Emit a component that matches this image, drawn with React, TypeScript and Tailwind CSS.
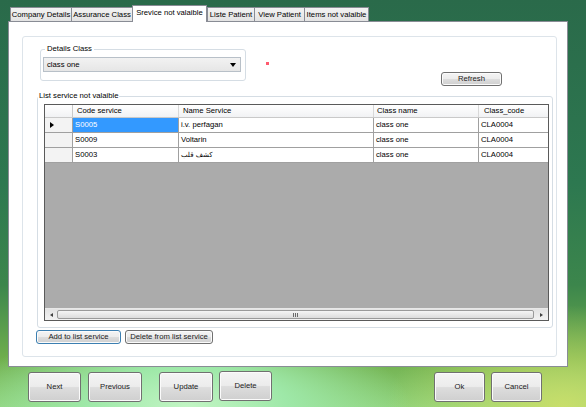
import type { ReactNode } from 'react';

const TABS = [
  { label: 'Company Details', w: 'w-[62px]' },
  { label: 'Assurance Class', w: 'w-[62px]' },
  { label: 'Srevice not valaible', w: 'w-[75px]', active: true },
  { label: 'Liste Patient', w: 'w-[48px]' },
  { label: 'View Patient', w: 'w-[51px]' },
  { label: 'Items not valaible', w: 'w-[65px]' },
];

const ROWS = [
  { code: 'S0005', name: 'i.v. perfagan', cls: 'class one', clsCode: 'CLA0004', current: true },
  { code: 'S0009', name: 'Voltarin', cls: 'class one', clsCode: 'CLA0004' },
  { code: 'S0003', name: 'كشف قلب', cls: 'class one', clsCode: 'CLA0004', arabic: true },
];

const BTN =
  'flex items-center justify-center rounded-[3px] border border-[#707070] bg-[linear-gradient(to_bottom,#f4f4f4_0%,#ececec_48%,#dddddd_52%,#cfcfcf_100%)] text-[#1a1a1a] shadow-[inset_0_0_0_1px_#fbfbfb]';

function WinButton({ children, className = '' }: { children: ReactNode; className?: string }) {
  return <button className={`${BTN} ${className}`}>{children}</button>;
}

export default function App() {
  return (
    <div
      className="w-[586px] h-[407px] overflow-hidden flex flex-col text-[7.7px] leading-none text-black bg-[radial-gradient(ellipse_38%_22%_at_32%_100%,#c2f5c4_0%,#9ee8a8_45%,transparent_100%),radial-gradient(ellipse_30%_25%_at_96%_100%,#c8de6a_0%,transparent_100%),linear-gradient(to_bottom,#2a6a4a_0%,#2d7850_45%,#3c864c_70%,#6fae4c_88%,#8fd27a_100%)]"
      style={{ fontFamily: '"Segoe UI", Tahoma, "Liberation Sans", "DejaVu Sans", sans-serif' }}
    >
      {/* Tab strip */}
      <div className="flex items-end h-[21px] pl-[10px]">
        {TABS.map((t) =>
          t.active ? (
            <div
              key={t.label}
              className={`${t.w} h-[17px] -mb-px z-10 bg-white border border-b-0 border-[#898c95] flex items-start justify-center pt-[3px]`}
            >
              {t.label}
            </div>
          ) : (
            <div
              key={t.label}
              className={`${t.w} h-[14px] bg-[linear-gradient(to_bottom,#f3f3f3,#e3e3e3)] border border-b-0 border-[#898c95] -mr-px flex items-center justify-center`}
            >
              {t.label}
            </div>
          ),
        )}
      </div>

      {/* Tab page */}
      <div className="ml-[8px] w-[560px] h-[346px] bg-white border border-[#898c95] pl-[13px] pt-[14px]">
        <div className="w-[535px] h-[321px] rounded-[3px] border border-[#dde4ea] flex flex-col">
          {/* Details class row */}
          <div className="flex items-start">
            <fieldset className="ml-[17px] mt-[7px] w-[206px] h-[37px] border border-[#d5dde4] rounded-[3px] px-[2px]">
              <legend className="ml-[2px] px-[2px] leading-[10px]">Details Class</legend>
              <div className="mt-[3px] h-[15px] w-[198px] border border-[#b8c0c8] bg-[linear-gradient(to_bottom,#f2f2f2,#e6e6e6)] flex items-center justify-between pl-[3px] pr-[4px]">
                <span>class one</span>
                <span className="w-0 h-0 border-l-[3px] border-r-[3px] border-t-[4px] border-l-transparent border-r-transparent border-t-black" />
              </div>
            </fieldset>
            <div className="ml-[20px] mt-[25px] w-[3px] h-[3px] bg-[#ff5a6e]" />
            <WinButton className="ml-auto mr-[54px] mt-[35px] w-[61px] h-[14px]">Refresh</WinButton>
          </div>

          {/* List fieldset */}
          <fieldset className="ml-[14px] mt-[5px] w-[516px] h-[237px] border border-[#d5dde4] rounded-[3px] pl-[6px]">
            <legend className="ml-[-6px] px-[1px] leading-[10px]">List service not valaible</legend>
            <div className="mt-[3px] w-[505px] h-[217px] border border-[#5a5a5a] bg-[#ababab] flex flex-col overflow-hidden">
              {/* Header */}
              <div className="flex h-[13px] bg-[linear-gradient(to_bottom,#ffffff,#f1f2f4)] border-b border-[#c9c9c9] shrink-0">
                <div className="w-[28px] shrink-0 border-r border-[#c9c9c9]" />
                <div className="w-[106px] shrink-0 border-r border-[#d8d8d8] pl-[4px] flex items-center">Code service</div>
                <div className="w-[195px] shrink-0 border-r border-[#d8d8d8] pl-[4px] flex items-center">Name Service</div>
                <div className="w-[105px] shrink-0 border-r border-[#d8d8d8] pl-[3px] flex items-center">Class name</div>
                <div className="w-[80px] shrink-0 pl-[5px] flex items-center">Class_code</div>
              </div>
              {/* Rows */}
              {ROWS.map((r) => (
                <div key={r.code} className="flex h-[15px] shrink-0 bg-white border-b border-[#a0a0a0]">
                  <div className="w-[28px] shrink-0 bg-[#f3f3f3] border-r border-[#a0a0a0] flex items-center pl-[5px]">
                    {r.current && (
                      <span className="w-0 h-0 border-t-[3px] border-b-[3px] border-l-[4px] border-t-transparent border-b-transparent border-l-black" />
                    )}
                  </div>
                  <div
                    className={`w-[106px] shrink-0 border-r border-[#a0a0a0] pl-[2px] flex items-center ${r.current ? 'bg-[#3399ff] text-white' : ''}`}
                  >
                    {r.code}
                  </div>
                  <div className="w-[195px] shrink-0 border-r border-[#a0a0a0] pl-[2px] flex items-center">
                    {r.arabic ? (
                      <span className="text-[7px] font-['DejaVu_Sans',sans-serif]">{r.name}</span>
                    ) : (
                      r.name
                    )}
                  </div>
                  <div className="w-[105px] shrink-0 border-r border-[#a0a0a0] pl-[2px] flex items-center">{r.cls}</div>
                  <div className="w-[80px] shrink-0 pl-[2px] flex items-center">{r.clsCode}</div>
                </div>
              ))}
              <div className="flex-1" />
              {/* Horizontal scrollbar */}
              <div className="h-[12px] shrink-0 flex items-stretch bg-[linear-gradient(to_bottom,#e3e3e3,#f2f2f2)] border-t border-[#e8e8e8]">
                <div className="w-[12px] flex items-center justify-center">
                  <span className="w-0 h-0 border-t-[2px] border-b-[2px] border-r-[3px] border-t-transparent border-b-transparent border-r-[#404040]" />
                </div>
                <div className="flex-1 my-[1px] rounded-[2px] border border-[#9a9a9a] bg-[linear-gradient(to_bottom,#f5f5f5,#dcdcdc)] flex items-center justify-center">
                  <span className="flex gap-[1px]">
                    <span className="w-px h-[4px] bg-[#6a6a6a]" />
                    <span className="w-px h-[4px] bg-[#6a6a6a]" />
                    <span className="w-px h-[4px] bg-[#6a6a6a]" />
                  </span>
                </div>
                <div className="w-[14px] flex items-center justify-center">
                  <span className="w-0 h-0 border-t-[2px] border-b-[2px] border-l-[3px] border-t-transparent border-b-transparent border-l-[#404040]" />
                </div>
              </div>
            </div>
          </fieldset>

          {/* List actions */}
          <div className="flex gap-[4px] ml-[13px] mt-[2px]">
            <WinButton className="w-[85px] h-[14px] !border-[#3c7fb1] shadow-[inset_0_0_0_1px_#bfe4f6]">Add to list service</WinButton>
            <WinButton className="w-[88px] h-[14px]">Delete from list service</WinButton>
          </div>
        </div>
      </div>

      {/* Bottom buttons */}
      <div className="flex items-start mt-[5px] pl-[28px]">
        <WinButton className="w-[53px] h-[30px]">Next</WinButton>
        <WinButton className="ml-[7px] w-[54px] h-[30px]">Previous</WinButton>
        <WinButton className="ml-[17px] w-[54px] h-[30px]">Update</WinButton>
        <WinButton className="ml-[6px] -mt-[1px] w-[53px] h-[30px]">Delete</WinButton>
        <WinButton className="ml-[162px] w-[51px] h-[30px]">Ok</WinButton>
        <WinButton className="ml-[6px] w-[51px] h-[30px]">Cancel</WinButton>
      </div>
    </div>
  );
}
